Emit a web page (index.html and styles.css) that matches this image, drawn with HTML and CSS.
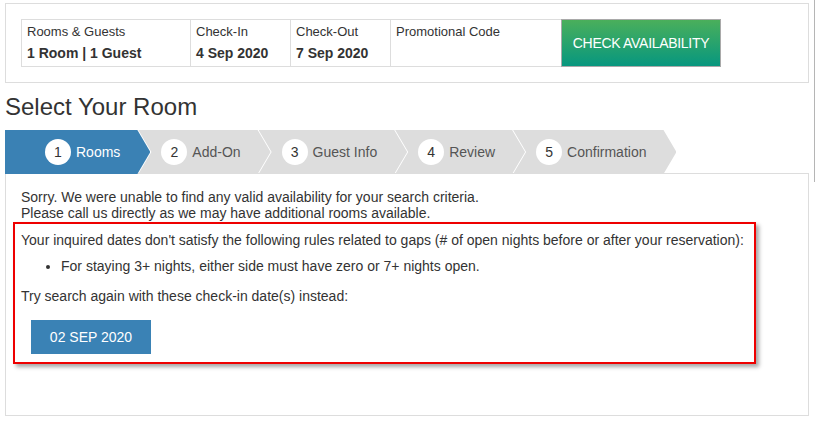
FILE: index.html
```html
<!DOCTYPE html>
<html lang="en">
<head>
<meta charset="utf-8">
<title>Select Your Room</title>
<link rel="stylesheet" href="styles.css">
</head>
<body>
<div class="page">
  <div class="main">
    <div class="search">
      <div class="search-row">
        <div class="cell cell-guests">
          <span class="cell-label">Rooms &amp; Guests</span>
          <span class="cell-value">1 Room | 1 Guest</span>
        </div>
        <div class="cell cell-date">
          <span class="cell-label">Check-In</span>
          <span class="cell-value">4 Sep 2020</span>
        </div>
        <div class="cell cell-date">
          <span class="cell-label">Check-Out</span>
          <span class="cell-value">7 Sep 2020</span>
        </div>
        <div class="cell cell-promo">
          <span class="cell-label">Promotional Code</span>
        </div>
        <button class="check-btn" type="button">CHECK AVAILABILITY</button>
      </div>
    </div>

    <h1 class="title">Select Your Room</h1>

    <div class="steps">
      <div class="step active"><span class="num">1</span><span class="label">Rooms</span></div>
      <div class="step"><span class="num">2</span><span class="label">Add-On</span></div>
      <div class="step"><span class="num">3</span><span class="label">Guest Info</span></div>
      <div class="step"><span class="num">4</span><span class="label">Review</span></div>
      <div class="step"><span class="num">5</span><span class="label">Confirmation</span></div>
    </div>

    <div class="panel">
      <p class="sorry">Sorry. We were unable to find any valid availability for your search criteria.<br>Please call us directly as we may have additional rooms available.</p>
      <div class="alert">
        <p class="rule-intro">Your inquired dates don't satisfy the following rules related to gaps (# of open nights before or after your reservation):</p>
        <ul class="rules">
          <li>For staying 3+ nights, either side must have zero or 7+ nights open.</li>
        </ul>
        <p class="try">Try search again with these check-in date(s) instead:</p>
        <button class="date-btn" type="button">02 SEP 2020</button>
      </div>
    </div>
  </div>
  <div class="edge"></div>
</div>
</body>
</html>
```

FILE: styles.css
```css
* {
  box-sizing: border-box;
}

html, body {
  margin: 0;
  padding: 0;
  background: #fff;
}

body {
  font-family: "Liberation Sans", Arial, sans-serif;
  font-size: 14px;
  line-height: 16px;
  color: #333;
}

.page {
  display: flex;
  align-items: flex-start;
}

.main {
  width: 809px;
  padding: 3px 0 0 5px;
}

.edge {
  width: 1px;
  height: 182px;
  margin-left: 5px;
  background: #b5b5b5;
}

/* search summary */
.search {
  border: 1px solid #ddd;
  padding: 15px;
}

.search-row {
  display: flex;
  height: 48px;
}

.cell {
  display: flex;
  flex-direction: column;
  padding: 3px 5px 3px 5px;
  border-top: 1px solid #ddd;
  border-bottom: 1px solid #ddd;
  border-right: 1px solid #ddd;
}

.cell-guests {
  width: 170px;
  border-left: 1px solid #ddd;
}

.cell-date {
  width: 100px;
}

.cell-promo {
  width: 170px;
  border-right: none;
}

.cell-label {
  font-size: 13px;
  line-height: 18px;
  color: #333;
}

.cell-value {
  margin-top: 2px;
  font-size: 14px;
  line-height: 20px;
  font-weight: bold;
  color: #333;
}

.check-btn {
  width: 160px;
  height: 48px;
  border: 1px solid #a9a9a9;
  background: linear-gradient(to bottom, #4aaf5b 0%, #07977f 100%);
  color: #fff;
  font-family: "Liberation Sans", Arial, sans-serif;
  font-size: 14px;
  letter-spacing: -0.3px;
  padding: 0;
  cursor: pointer;
}

/* heading */
.title {
  margin: 9px 0 8px;
  font-size: 24px;
  line-height: 30px;
  font-weight: normal;
  color: #333;
}

/* steps */
.steps {
  display: flex;
  height: 44px;
  position: relative;
  z-index: 1;
}

.step {
  display: flex;
  align-items: center;
  height: 44px;
  padding: 0 30px 0 23px;
  margin-left: -12px;
  background: #dddddd;
  color: #555;
  clip-path: polygon(0 0, calc(100% - 13px) 0, 100% 50%, calc(100% - 13px) 100%, 0 100%, 13px 50%);
}

.step:first-child {
  margin-left: 0;
  padding-left: 40px;
  clip-path: polygon(0 0, calc(100% - 13px) 0, 100% 50%, calc(100% - 13px) 100%, 0 100%);
}

.step.active {
  background: #3a81b4;
  color: #fff;
}

.num {
  width: 26px;
  height: 26px;
  margin-right: 5px;
  border-radius: 50%;
  background: #fff;
  color: #333;
  display: flex;
  align-items: center;
  justify-content: center;
  font-size: 14px;
}

.label {
  font-size: 14px;
}

/* content panel */
.panel {
  margin-top: -1px;
  border: 1px solid #ddd;
  padding: 15px 15px 51px;
}

.sorry {
  margin: 0;
}

.alert {
  margin: 1px 0 0 -8px;
  width: 743px;
  border: 2px solid #ee0000;
  padding: 8px 6px 8px;
  box-shadow: 3px 3px 4px rgba(0, 0, 0, 0.35);
}

.rule-intro {
  margin: 0 0 10px;
}

.rules {
  margin: 0 0 14px;
  padding-left: 40px;
}

.try {
  margin: 0;
}

.date-btn {
  display: block;
  margin: 16px 0 0 10px;
  width: 120px;
  height: 34px;
  border: none;
  background: #3a82b5;
  color: #fff;
  font-family: "Liberation Sans", Arial, sans-serif;
  font-size: 14px;
  padding: 0;
  cursor: pointer;
}
```
